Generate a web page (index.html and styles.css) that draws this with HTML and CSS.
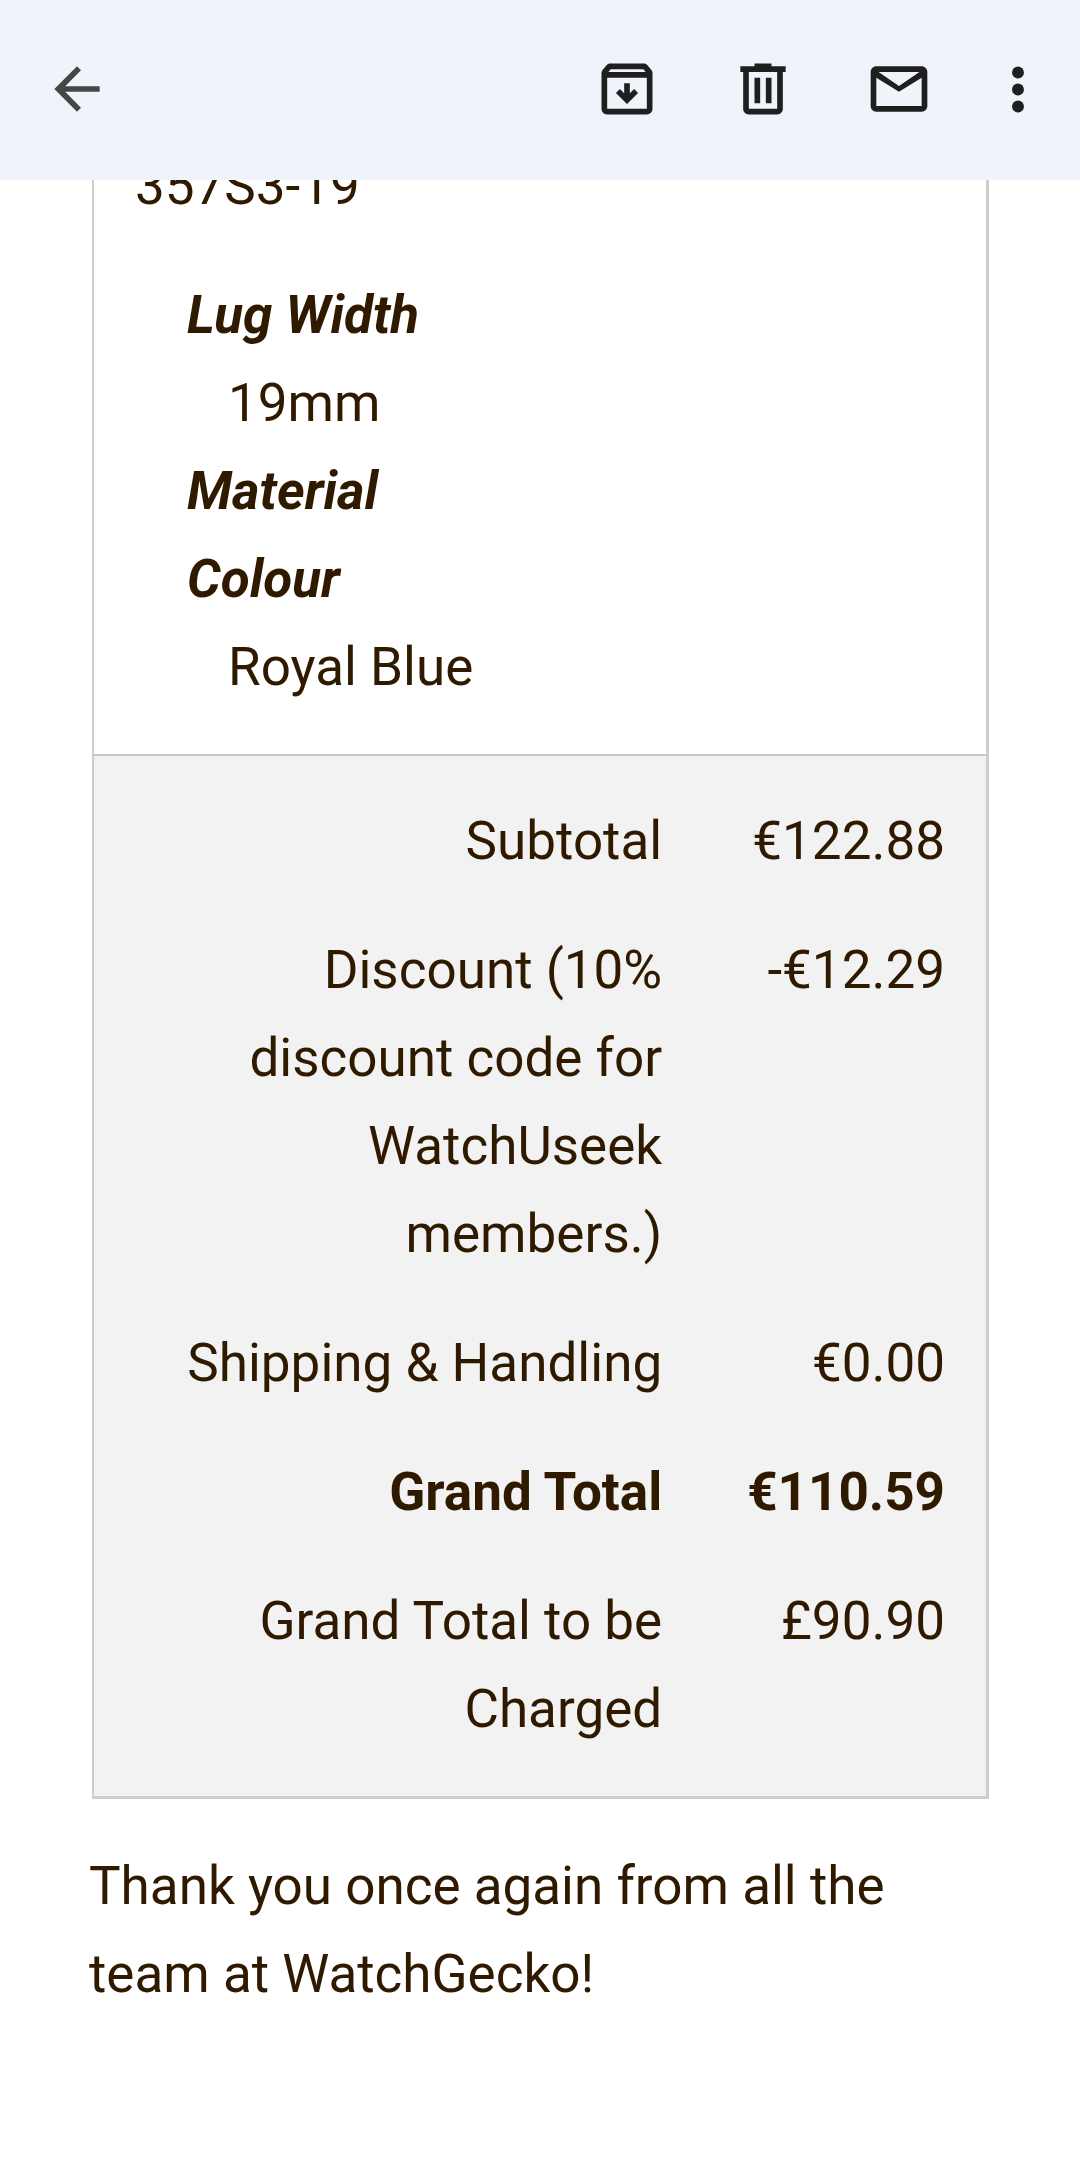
FILE: index.html
```html
<!DOCTYPE html>
<html lang="en">
	<head>
		<meta charset="UTF-8">
		<title>Order confirmation</title>
		<link rel="stylesheet" href="styles.css">
	</head>
	<body>
		<header class="toolbar">
			<button type="button" class="back" aria-label="Back">
				<svg viewBox="0 0 24 24"><path d="M20 11H7.83l5.59-5.59L12 4l-8 8 8 8 1.41-1.41L7.83 13H20z"/></svg>
			</button>
			<div class="actions">
				<button type="button" aria-label="Archive">
					<svg viewBox="0 0 24 24"><path fill-rule="evenodd" d="M20.54 5.23l-1.39-1.68C18.88 3.21 18.47 3 18 3H6c-.47 0-.88.21-1.16.55L3.46 5.23C3.17 5.57 3 6.02 3 6.5V19c0 1.1.9 2 2 2h14c1.1 0 2-.9 2-2V6.5c0-.48-.17-.93-.46-1.27zM6.24 5h11.52l.83 1H5.42zM5 19V8h14v11zM11 10h2v3.5l1.5-1.5 1.4 1.4-3.9 3.9-3.9-3.9 1.4-1.4 1.5 1.5z"/></svg>
				</button>
				<button type="button" aria-label="Delete">
					<svg viewBox="0 0 24 24"><path fill-rule="evenodd" d="M7 21c-1.1 0-2-.9-2-2V6H4V4h5V3h6v1h5v2h-1v13c0 1.1-.9 2-2 2zM17 6H7v13h10zM9 17h2V8H9zM13 17h2V8h-2z"/></svg>
				</button>
				<button type="button" aria-label="Mark as unread">
					<svg viewBox="0 0 24 24"><path fill-rule="evenodd" d="M4 20c-1.1 0-2-.9-2-2V6c0-1.1.9-2 2-2h16c1.1 0 2 .9 2 2v12c0 1.1-.9 2-2 2zM12 13L4 8v10h16V8zM12 10.9L19.2 6H4.8z"/></svg>
				</button>
			</div>
			<button type="button" class="more" aria-label="More options">
				<svg viewBox="0 0 24 24"><circle cx="12" cy="6.2" r="2.1"/><circle cx="12" cy="12.2" r="2.1"/><circle cx="12" cy="18.2" r="2.1"/></svg>
			</button>
		</header>
		<main class="message">
			<table class="order">
				<tbody>
					<tr>
						<td class="item" colspan="2">
							<p>357S3-19</p>
							<dl>
								<dt>Lug Width</dt>
								<dd>19mm</dd>
								<dt>Material</dt>
								<dt>Colour</dt>
								<dd>Royal Blue</dd>
							</dl>
						</td>
					</tr>
				</tbody>
				<tbody class="totals">
					<tr>
						<th scope="row">Subtotal</th>
						<td>€122.88</td>
					</tr>
					<tr>
						<th scope="row">Discount (10% discount code for WatchUseek members.)</th>
						<td>-€12.29</td>
					</tr>
					<tr>
						<th scope="row">Shipping &amp; Handling</th>
						<td>€0.00</td>
					</tr>
					<tr class="grand">
						<th scope="row">Grand Total</th>
						<td>€110.59</td>
					</tr>
					<tr>
						<th scope="row">Grand Total to be Charged</th>
						<td>£90.90</td>
					</tr>
				</tbody>
			</table>
			<p class="thanks">Thank you once again from all the team at WatchGecko!</p>
		</main>
	</body>
</html>
```
FILE: styles.css
```css
body{
	margin: 0;
	background: #fff;
	color: #2f1a00;
	font-family: Roboto, "Liberation Sans", sans-serif;
	font-size: 53px;
	line-height: 88px;
}
p, dl, dd{
	margin: 0;
}

/* top bar, the message scrolls under it */
.toolbar{
	display: flex;
	align-items: center;
	position: sticky;
	top: 0;
	z-index: 1;
	padding: 55px 28px 57px 43px;
	background: #eff4fb;
}
.toolbar button{
	display: block;
	width: 68px;
	height: 68px;
	padding: 0;
	border: 0;
	background: none;
	color: #1f1f1f;
}
.toolbar .back{
	color: #444746;
}
.toolbar svg{
	display: block;
	width: 100%;
	height: 100%;
	fill: currentColor;
}
.actions{
	display: flex;
	gap: 68px;
	margin-left: auto;
	margin-right: 51px;
}

.message{
	margin-top: -60px;
	padding: 0 89px;
}
.order{
	width: calc(100% - 5px);
	margin: 0 2px 0 3px;
	border: solid #cfccca;
	border-width: 2px 3px 3px 2px;
	border-spacing: 0;
}
.item{
	padding: 20px 41px 43px;
}
.item dl{
	margin-top: 41px;
	padding-left: 52px;
}
.item dt{
	font-weight: bold;
	font-style: italic;
}
.item dd{
	margin-left: 41px;
}

.totals th,
.totals td{
	padding: 20px 41px 21px;
	background: #f2f2f2;
	font-weight: normal;
	text-align: right;
	vertical-align: top;
}
.totals td{
	padding-left: 44px;
	white-space: nowrap;
}
.totals tr:first-child th,
.totals tr:first-child td{
	padding-top: 41px;
	border-top: 2px solid #c9c7c4;
}
.totals tr:last-child th,
.totals tr:last-child td{
	padding-bottom: 43px;
}
.totals .grand th,
.totals .grand td{
	font-weight: bold;
}
.thanks{
	margin: 43px 0;
}
```
